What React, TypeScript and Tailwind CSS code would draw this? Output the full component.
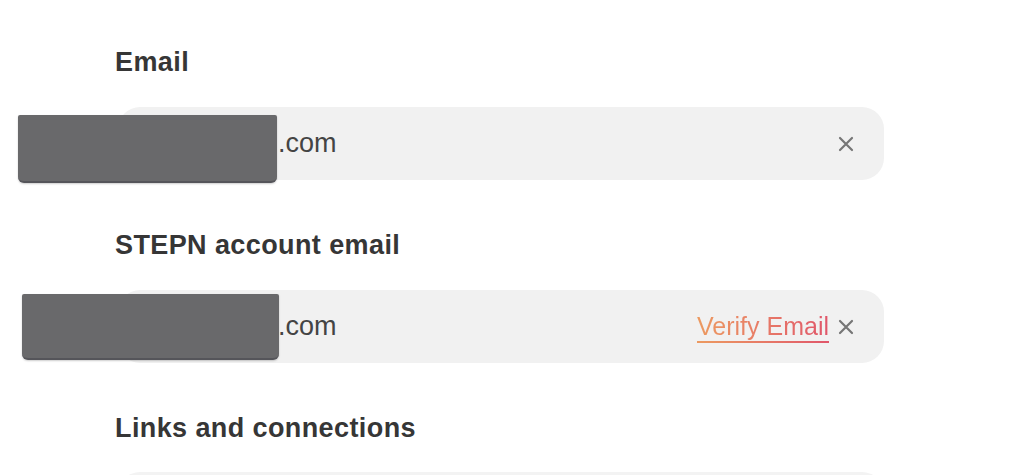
import React from "react";

const font = { fontFamily: '"Liberation Sans", Arial, sans-serif' };

function CloseIcon() {
  return (
    <svg width="16" height="16" viewBox="0 0 16 16" className="shrink-0">
      <path d="M2 2 L14 14 M14 2 L2 14" stroke="#767676" strokeWidth="2.2" strokeLinecap="round" />
    </svg>
  );
}

function Label({ text }: { text: string }) {
  return (
    <div className="h-10 flex items-center pl-[115px] text-[27px] font-bold text-[#363636] tracking-[0.4px]">
      {text}
    </div>
  );
}

function EmailField({ verify }: { verify?: boolean }) {
  return (
    <div className="ml-[118px] w-[766px] h-[73px] rounded-[22px] bg-[#f1f1f1] flex items-center pl-[160px] pr-[30px]">
      <span className="text-[27px] text-[#444]">.com</span>
      <div className="flex-1" />
      {verify && (
        <div className="flex flex-col mr-[9px]">
          <span className="text-[25px] leading-[30px] bg-gradient-to-r from-[#ec9a60] to-[#e0566a] bg-clip-text text-transparent">
            Verify Email
          </span>
          <div className="h-[2px] bg-gradient-to-r from-[#ec9a60] to-[#e0566a]" />
        </div>
      )}
      <CloseIcon />
    </div>
  );
}

function Redaction({ className }: { className: string }) {
  return (
    <div
      className={`absolute bg-[#69696b] rounded-b-[6px] rounded-t-[2px] border-b-2 border-[#55555a] shadow-[0_1px_2px_rgba(0,0,0,0.2)] ${className}`}
    />
  );
}

export default function App() {
  return (
    <div className="relative w-[1024px] h-[475px] bg-white overflow-hidden" style={font}>
      <div className="flex flex-col pt-[42px]">
        <Label text="Email" />
        <div className="h-[25px]" />
        <EmailField />
        <div className="h-[45px]" />
        <Label text="STEPN account email" />
        <div className="h-[25px]" />
        <EmailField verify />
        <div className="h-[45px]" />
        <Label text="Links and connections" />
        <div className="h-[24px]" />
        <div className="ml-[118px] w-[766px] h-[73px] rounded-[22px] bg-[#f3f3f3]" />
      </div>
      <Redaction className="left-[18px] top-[115px] w-[259px] h-[68px]" />
      <Redaction className="left-[22px] top-[294px] w-[257px] h-[66px]" />
    </div>
  );
}
